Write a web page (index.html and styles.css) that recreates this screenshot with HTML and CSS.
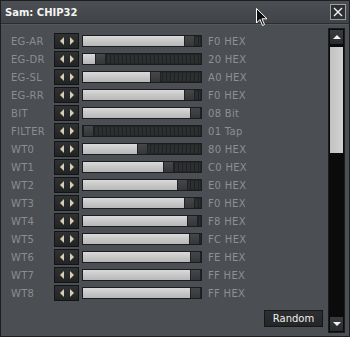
FILE: index.html
```html
<!DOCTYPE html>
<html lang="en">
<head>
  <meta charset="UTF-8" />
  <title>Sam: CHIP32</title>
  <link rel="stylesheet" href="styles.css">
</head>
<body>
  <div class="window">
    <div class="titlebar">
      <span class="title">Sam: CHIP32</span>
      <button class="close">
        <svg width="10" height="10" viewBox="0 0 10 10"><path d="M1 1 L9 9 M9 1 L1 9" stroke="#f2f2f2" stroke-width="1.4"/></svg>
      </button>
    </div>

    <div class="content">
      <div class="main">
        <div class="rows">
          <div class="row"><span class="label">EG-AR</span><span class="spin"><i class="tri-l"></i><i class="tri-r"></i></span><div class="slider"><div class="fill" style="width:101px"></div><div class="handle"></div></div><span class="value">F0 HEX</span></div>
          <div class="row"><span class="label">EG-DR</span><span class="spin"><i class="tri-l"></i><i class="tri-r"></i></span><div class="slider"><div class="fill" style="width:12px"></div><div class="handle"></div></div><span class="value">20 HEX</span></div>
          <div class="row"><span class="label">EG-SL</span><span class="spin"><i class="tri-l"></i><i class="tri-r"></i></span><div class="slider"><div class="fill" style="width:67px"></div><div class="handle"></div></div><span class="value">A0 HEX</span></div>
          <div class="row"><span class="label">EG-RR</span><span class="spin"><i class="tri-l"></i><i class="tri-r"></i></span><div class="slider"><div class="fill" style="width:101px"></div><div class="handle"></div></div><span class="value">F0 HEX</span></div>
          <div class="row"><span class="label">BIT</span><span class="spin"><i class="tri-l"></i><i class="tri-r"></i></span><div class="slider"><div class="fill" style="width:107px"></div><div class="handle"></div></div><span class="value">08 Bit</span></div>
          <div class="row"><span class="label">FILTER</span><span class="spin"><i class="tri-l"></i><i class="tri-r"></i></span><div class="slider"><div class="fill" style="width:0px"></div><div class="handle"></div></div><span class="value">01 Tap</span></div>
          <div class="row"><span class="label">WT0</span><span class="spin"><i class="tri-l"></i><i class="tri-r"></i></span><div class="slider"><div class="fill" style="width:54px"></div><div class="handle"></div></div><span class="value">80 HEX</span></div>
          <div class="row"><span class="label">WT1</span><span class="spin"><i class="tri-l"></i><i class="tri-r"></i></span><div class="slider"><div class="fill" style="width:80px"></div><div class="handle"></div></div><span class="value">C0 HEX</span></div>
          <div class="row"><span class="label">WT2</span><span class="spin"><i class="tri-l"></i><i class="tri-r"></i></span><div class="slider"><div class="fill" style="width:94px"></div><div class="handle"></div></div><span class="value">E0 HEX</span></div>
          <div class="row"><span class="label">WT3</span><span class="spin"><i class="tri-l"></i><i class="tri-r"></i></span><div class="slider"><div class="fill" style="width:101px"></div><div class="handle"></div></div><span class="value">F0 HEX</span></div>
          <div class="row"><span class="label">WT4</span><span class="spin"><i class="tri-l"></i><i class="tri-r"></i></span><div class="slider"><div class="fill" style="width:104px"></div><div class="handle"></div></div><span class="value">F8 HEX</span></div>
          <div class="row"><span class="label">WT5</span><span class="spin"><i class="tri-l"></i><i class="tri-r"></i></span><div class="slider"><div class="fill" style="width:106px"></div><div class="handle"></div></div><span class="value">FC HEX</span></div>
          <div class="row"><span class="label">WT6</span><span class="spin"><i class="tri-l"></i><i class="tri-r"></i></span><div class="slider"><div class="fill" style="width:107px"></div><div class="handle"></div></div><span class="value">FE HEX</span></div>
          <div class="row"><span class="label">WT7</span><span class="spin"><i class="tri-l"></i><i class="tri-r"></i></span><div class="slider"><div class="fill" style="width:107px"></div><div class="handle"></div></div><span class="value">FF HEX</span></div>
          <div class="row"><span class="label">WT8</span><span class="spin"><i class="tri-l"></i><i class="tri-r"></i></span><div class="slider"><div class="fill" style="width:107px"></div><div class="handle"></div></div><span class="value">FF HEX</span></div>
        </div>
        <div class="footer">
          <button class="random">Random</button>
        </div>
      </div>

      <div class="scrollbar">
        <div class="sb-btn"><i class="tri-up"></i></div>
        <div class="sb-track"><div class="sb-thumb"></div></div>
        <div class="sb-btn"><i class="tri-down"></i></div>
      </div>
    </div>
  </div>

  <!-- mouse pointer captured in the shot -->
  <svg class="cursor" width="12" height="19" viewBox="0 0 12 19">
    <path d="M0.5 0.5 L0.5 15 L4 11.5 L6.5 17.5 L8.5 16.5 L6 10.8 L11 10.8 Z" fill="#111" stroke="#fff" stroke-width="1"/>
  </svg>
</body>
</html>
```

FILE: styles.css
```css
body {
  margin: 0;
  background: #4b4e52;
  font-family: "DejaVu Sans", sans-serif;
  position: relative;
}

.window {
  width: 350px;
  height: 337px;
  box-sizing: border-box;
  border: 1px solid #1d1e20;
  background: #4b4e52;
  display: flex;
  flex-direction: column;
}

.titlebar {
  height: 23px;
  box-sizing: border-box;
  display: flex;
  align-items: center;
  justify-content: space-between;
  padding: 0 3px 0 4px;
  background: linear-gradient(#4b4e52, #414447);
  border-bottom: 1px solid #2b2d30;
}

.title {
  color: #f4f4f4;
  font-size: 10px;
  font-weight: bold;
}

.close {
  width: 16px;
  height: 16px;
  padding: 0;
  box-sizing: border-box;
  border: 1px solid #9c9ea0;
  background: #2e3032;
  display: flex;
  align-items: center;
  justify-content: center;
}

.content {
  flex: 1;
  display: flex;
  padding: 3px 4px 3px 0;
  border-top: 1px solid #55585c;
}

.main {
  flex: 1;
  display: flex;
  flex-direction: column;
  padding: 4px 0 0 10px;
}

.rows {
  display: flex;
  flex-direction: column;
}

.row {
  height: 18px;
  display: flex;
  align-items: center;
}

.label {
  width: 43px;
  color: #8b8d90;
  font-size: 10px;
  letter-spacing: 0.3px;
}

.spin {
  width: 25px;
  height: 16px;
  box-sizing: border-box;
  margin-right: 3px;
  border: 1px solid #131415;
  background: linear-gradient(#303133, #222325);
  display: flex;
  align-items: center;
  justify-content: center;
  gap: 6px;
}

.tri-l, .tri-r {
  width: 0;
  height: 0;
  border-top: 4px solid transparent;
  border-bottom: 4px solid transparent;
}

.tri-l { border-right: 4px solid #d8ceb2; }
.tri-r { border-left: 4px solid #d8ceb2; }

.slider {
  width: 120px;
  height: 12px;
  box-sizing: border-box;
  border: 1px solid #1b1c1e;
  display: flex;
  background: repeating-linear-gradient(90deg, #2e2f31 0 3px, #1f2022 3px 4px);
  box-shadow: inset 0 0 0 1px #242527;
}

.fill {
  height: 100%;
  background: linear-gradient(#dadada, #c4c4c4 60%, #b8b8b8);
}

.handle {
  width: 11px;
  height: 100%;
  box-sizing: border-box;
  background: linear-gradient(#46474a, #353638);
  border-left: 1px solid #202123;
  border-right: 1px solid #202123;
}

.value {
  margin-left: 6px;
  color: #8e9093;
  font-size: 10px;
  letter-spacing: 0.3px;
}

.footer {
  margin-top: auto;
  display: flex;
  justify-content: flex-end;
  padding: 0 5px 6px 0;
}

.random {
  width: 59px;
  height: 17px;
  padding: 0;
  box-sizing: border-box;
  border: 1px solid #161718;
  background: linear-gradient(#2e2f31, #242527);
  color: #f0f0f0;
  font-family: "DejaVu Sans", sans-serif;
  font-size: 10px;
}

.scrollbar {
  width: 17px;
  box-sizing: border-box;
  border: 1px solid #1a1b1c;
  background: #0b0b0b;
  display: flex;
  flex-direction: column;
}

.sb-btn {
  height: 16px;
  box-sizing: border-box;
  border: 1px solid #0b0b0b;
  background: linear-gradient(#3a3b3e, #2a2b2d);
  display: flex;
  align-items: center;
  justify-content: center;
}

.tri-up, .tri-down {
  width: 0;
  height: 0;
  border-left: 4px solid transparent;
  border-right: 4px solid transparent;
}

.tri-up { border-bottom: 4px solid #f2f2f2; }
.tri-down { border-top: 4px solid #f2f2f2; }

.sb-track {
  flex: 1;
  padding: 2px 1px 0 1px;
}

.sb-thumb {
  height: 106px;
  background: linear-gradient(90deg, #c2c2c2, #d2d2d2);
}

.cursor {
  position: absolute;
  left: 256px;
  top: 8px;
}
```
